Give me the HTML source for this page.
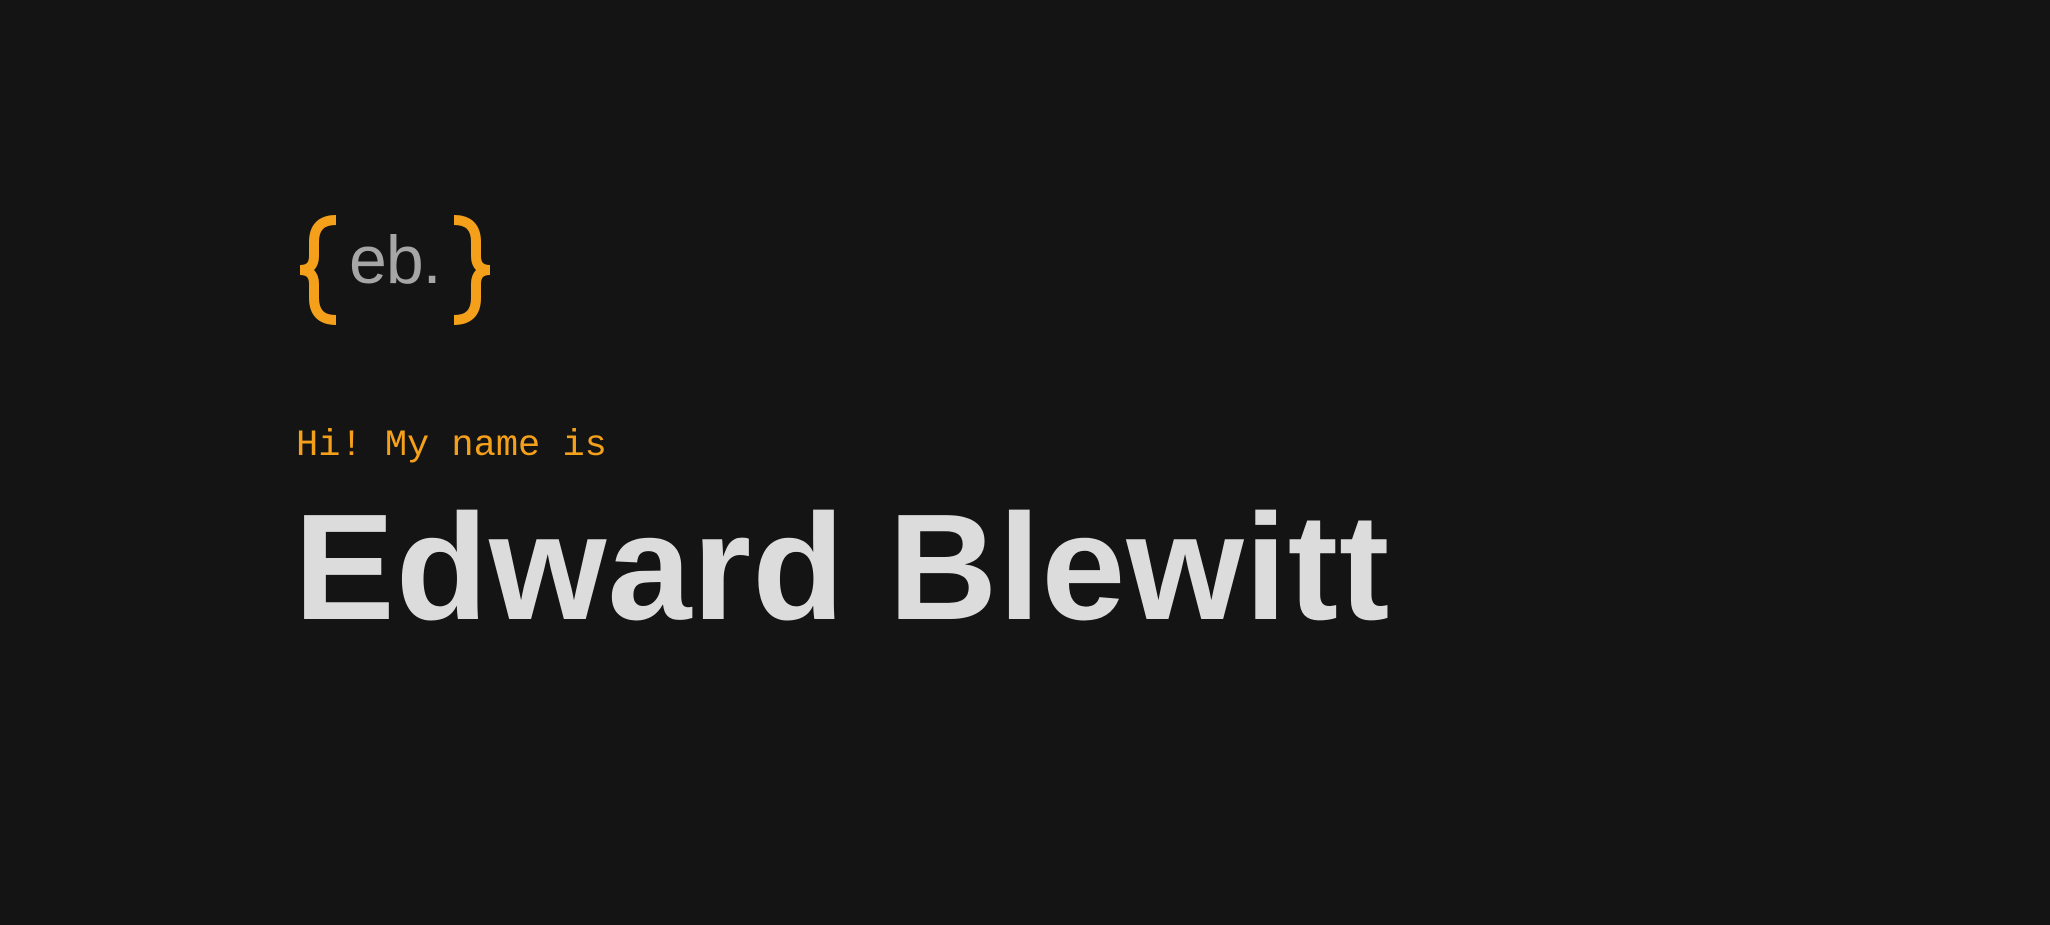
<!DOCTYPE html>
<html><head><meta charset="utf-8"><style>
html,body{margin:0;padding:0;background:#141414;width:2050px;height:925px;overflow:hidden;position:relative}
.t{position:absolute;white-space:nowrap;line-height:1}
</style></head><body>
<svg style="position:absolute;left:0;top:0" width="2050" height="925">
<g fill="none" stroke="#f5a01a" stroke-width="10" stroke-linecap="butt">
<path d="M336 220 Q314 220 314 242 L314 256 Q314 270 300 270 Q314 270 314 284 L314 298 Q314 320 336 320"/>
<path d="M454 220 Q476 220 476 242 L476 256 Q476 270 490 270 Q476 270 476 284 L476 298 Q476 320 454 320"/>
</g>
</svg>
<div class="t" style="left:349px;top:226px;font-family:'Liberation Sans',sans-serif;font-size:68px;color:#a6a6a6;letter-spacing:-1px">eb.</div>
<div class="t" style="left:296px;top:428px;font-family:'Liberation Mono',monospace;font-size:37px;color:#f5a01a">Hi! My name is</div>
<div class="t" style="left:294px;top:491px;font-family:'Liberation Sans',sans-serif;font-weight:bold;font-size:151px;color:#dcdcdc;letter-spacing:1px">Edward Blewitt</div>
</body></html>
